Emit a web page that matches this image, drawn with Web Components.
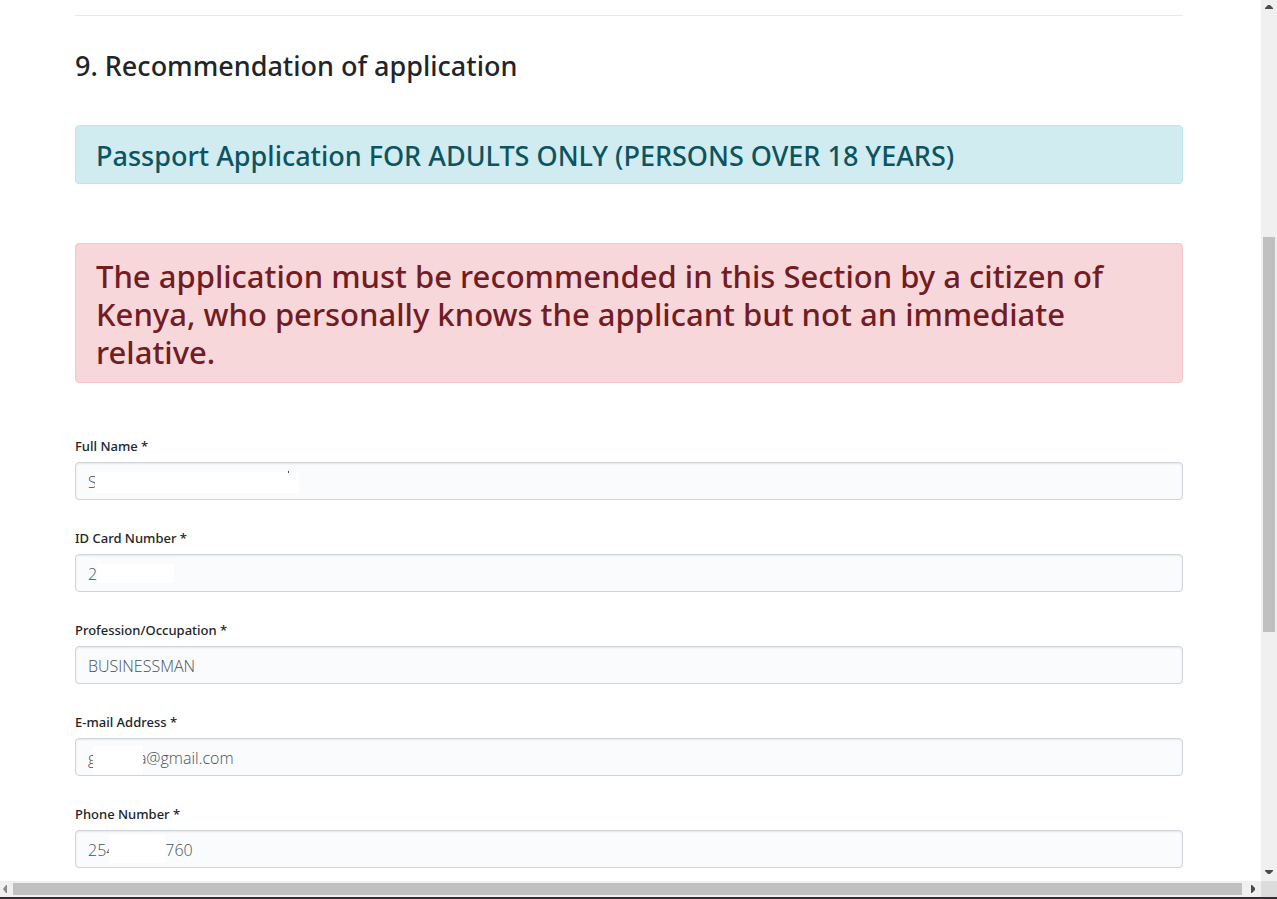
<!DOCTYPE html>
<html lang="en">
<head>
<meta charset="utf-8">
<title>Passport Application</title>
<style>
html, body { margin: 0; height: 100%; overflow: hidden; }
body { background: #fff; color: #212529; font-family: "Noto Sans", "Open Sans", sans-serif; }
</style>
</head>
<body>
<app-viewport>
  <form-section heading="9. Recommendation of application">
    <alert-box kind="info">Passport Application FOR ADULTS ONLY (PERSONS OVER 18 YEARS)</alert-box>
    <alert-box kind="danger">The application must be recommended in this Section by a citizen of Kenya, who personally knows the applicant but not an immediate relative.</alert-box>
    <form-field label="Full Name *" value="S"><redaction-mark style="--x:20px;--y:10px;--w:204px;--h:21px"></redaction-mark><redaction-mark style="--x:213px;--y:9px;--w:1px;--h:2px;--ink:#495057"></redaction-mark></form-field>
    <form-field label="ID Card Number *" value="2"><redaction-mark style="--x:22px;--y:10px;--w:77px;--h:19px"></redaction-mark></form-field>
    <form-field label="Profession/Occupation *" value="BUSINESSMAN"></form-field>
    <form-field label="E-mail Address *" value="g&nbsp;&nbsp;&nbsp;&nbsp;&nbsp;&nbsp;&nbsp;&nbsp;&nbsp;&nbsp;a@gmail.com"><redaction-mark style="--x:18px;--y:8px;--w:50px;--h:28px"></redaction-mark></form-field>
    <form-field label="Phone Number *" value="254&nbsp;&nbsp;&nbsp;&nbsp;&nbsp;&nbsp;&nbsp;&nbsp;&nbsp;&nbsp;&nbsp;&nbsp;760"><redaction-mark style="--x:34px;--y:5px;--w:56px;--h:28px"></redaction-mark></form-field>
  </form-section>
</app-viewport>
<script>
class Base extends HTMLElement {
  render(html) { this.attachShadow({ mode: "open" }).innerHTML = html; }
}

customElements.define("scroll-track", class extends Base {
  connectedCallback() {
    const vertical = this.hasAttribute("vertical");
    const arrow = points => `<svg viewBox="0 0 16 12" width="16" height="12" aria-hidden="true"><path d="${points}" fill="#4c4c4c"/></svg>`;
    const side = points => `<svg viewBox="0 0 12 16" width="12" height="16" aria-hidden="true"><path d="${points}" fill="${points[1] === "3" ? "#8a8a8a" : "#4c4c4c"}"/></svg>`;
    this.render(`<style>
      :host { display: flex; background: #f0f0f0; min-width: 0; min-height: 0; }
      :host([vertical]) { flex-direction: column; }
      svg { display: block; flex: none; }
      .track { flex: 1; display: flex; flex-direction: inherit; padding: 2px 0; }
      :host([vertical]) .track { padding: 0 2px; }
      .before { flex: var(--before) 1 0; }
      .thumb { flex: var(--thumb) 1 0; background: #c0c0c0; }
      .after { flex: var(--after) 1 0; }
    </style>
    ${vertical ? arrow("M4 9V8L7 5H9L12 8V9Z") : side("M3 8L6 4H7V12H6Z")}
    <div class="track"><div class="before"></div><div class="thumb"></div><div class="after"></div></div>
    ${vertical ? arrow("M4 1V2L7 5H9L12 2V1Z") : side("M2 4H3L6 7V9L3 12H2Z")}`);
  }
});

customElements.define("app-viewport", class extends Base {
  connectedCallback() {
    this.render(`<style>
      :host { display: grid; grid-template: minmax(0, 1fr) 16px 2px / minmax(0, 1fr) 16px; height: 100vh; }
      main { overflow: hidden; }
      .corner { background: #dcdcdc; }
      .edge { grid-column: 1 / -1; background: #312d31; }
      .v { --before: 225; --thumb: 395; --after: 237; }
      .h { --before: 1; --thumb: 1229; --after: 7; }
    </style>
    <main><slot></slot></main>
    <scroll-track class="v" vertical></scroll-track>
    <scroll-track class="h"></scroll-track>
    <div class="corner"></div>
    <div class="edge"></div>`);
  }
});

customElements.define("form-section", class extends Base {
  connectedCallback() {
    this.render(`<style>
      :host { display: block; padding: 15px 78px 32px 75px; }
      hr { margin: 0 0 33px; border: 0; border-top: 1px solid #e9e9e9; }
      h3 { margin: 0 0 42px; font-size: 27px; line-height: 34px; font-weight: 500; }
    </style>
    <hr><h3>${this.getAttribute("heading")}</h3><slot></slot>`);
  }
});

customElements.define("alert-box", class extends Base {
  connectedCallback() {
    const tag = this.getAttribute("kind") === "info" ? "h3" : "h2";
    this.render(`<style>
      :host { display: block; margin-bottom: 59px; padding: 13px 20px 11px; border: 1px solid #bee5eb; border-radius: 4px; background: #d1ecf1; color: #0c5460; }
      :host([kind="danger"]) { border-color: #f5c6cb; background: #f8d7da; color: #721c24; }
      h2, h3 { margin: 0; font-weight: 500; }
      h3 { font-size: 27px; line-height: 33px; }
      h2 { font-size: 31px; line-height: 38px; }
    </style><${tag}><slot></slot></${tag}>`);
  }
});

customElements.define("form-field", class extends Base {
  connectedCallback() {
    this.render(`<style>
      :host { display: block; margin-bottom: 34px; }
      label { display: block; padding-bottom: 9px; margin-top: -3px; font-size: 13px; line-height: 14px; font-weight: 500; }
      .control { position: relative; }
      input { display: block; box-sizing: border-box; width: 100%; height: 38px; margin: 0; padding: 7px 12px 5px; border: 1px solid #ced4da; border-radius: 4px; background: #fafbfd; color: #495057; font: 300 16px/24px "Open Sans", "Noto Sans", sans-serif; box-shadow: inset 0 1px 2px #e4e6e8; }
    </style>
    <label for="field"></label>
    <div class="control"><input id="field" type="text"><slot></slot></div>`);
    this.shadowRoot.querySelector("label").textContent = this.getAttribute("label");
    this.shadowRoot.querySelector("input").value = this.getAttribute("value");
  }
});

customElements.define("redaction-mark", class extends Base {
  connectedCallback() {
    this.render(`<style>
      :host { position: absolute; left: var(--x); top: var(--y); width: var(--w); height: var(--h); background: var(--ink, #fff); }
    </style>`);
  }
});
</script>
</body>
</html>
